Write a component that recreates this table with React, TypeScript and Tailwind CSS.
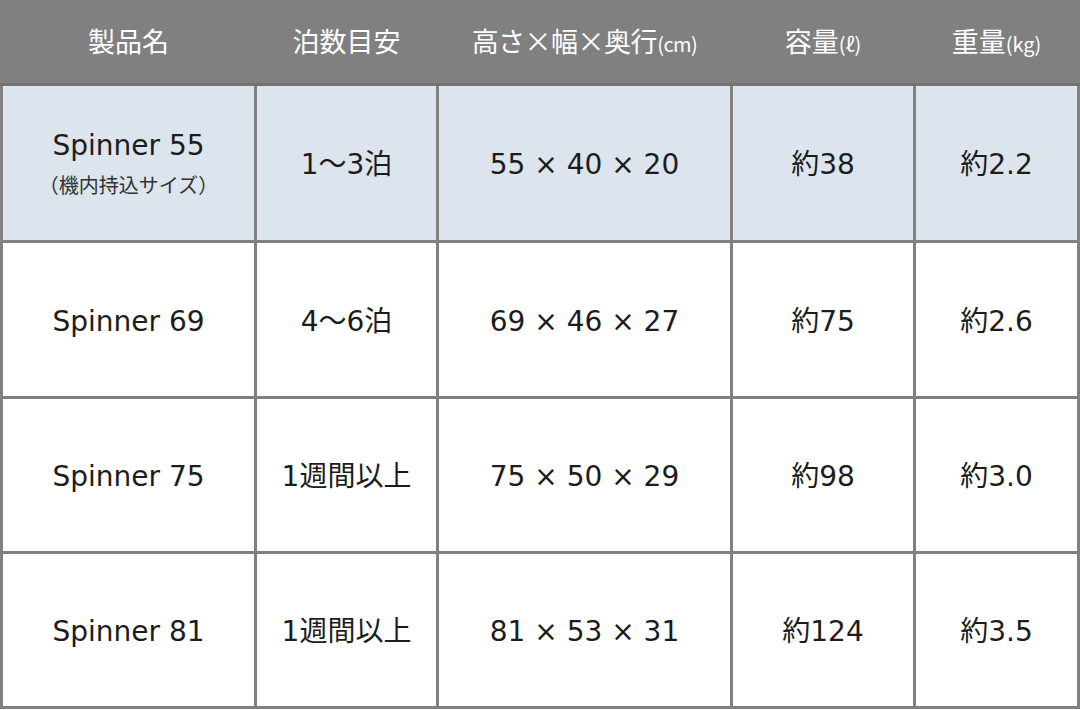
const cols = "grid grid-cols-[251px_179px_291px_180px_161px] gap-x-[3px] px-[3px]";

const rows = [
  { name: "Spinner 55", sub: "（機内持込サイズ）", nights: "1〜3泊", size: "55 × 40 × 20", vol: "約38", weight: "約2.2", h: "h-[154px]", bg: "bg-[#dce4ee]" },
  { name: "Spinner 69", nights: "4〜6泊", size: "69 × 46 × 27", vol: "約75", weight: "約2.6", h: "h-[153px]", bg: "bg-white" },
  { name: "Spinner 75", nights: "1週間以上", size: "75 × 50 × 29", vol: "約98", weight: "約3.0", h: "h-[152px]", bg: "bg-white" },
  { name: "Spinner 81", nights: "1週間以上", size: "81 × 53 × 31", vol: "約124", weight: "約3.5", h: "h-[152px]", bg: "bg-white" },
];

const Cell = ({ children, bg }: { children: React.ReactNode; bg: string }) => (
  <div className={`${bg} pt-[4px] flex flex-col items-center justify-center text-center`}>{children}</div>
);

export default function App() {
  return (
    <div className="w-[1080px] h-[710px] bg-white">
      <div className="bg-[#808080] font-['Noto_Sans_CJK_JP',sans-serif]">
        <div className={`${cols} h-[83px] items-center text-white text-[27px] text-center`}>
          <div>製品名</div>
          <div>泊数目安</div>
          <div className="tracking-[-0.5px]">
            高さ×幅×奥行<span className="text-[20px]">(cm)</span>
          </div>
          <div>
            容量<span className="text-[20px]">(ℓ)</span>
          </div>
          <div>
            重量<span className="text-[20px]">(kg)</span>
          </div>
        </div>
        <div className="h-[3px] bg-[#727272]" />
        <div
          className={`${cols} gap-y-[3px] pb-[3px] text-[#1c1c1c] text-[28px] font-['DejaVu_Sans','Noto_Sans_CJK_JP',sans-serif]`}
        >
          {rows.map((r) => (
            <div key={r.name} className="contents">
              <div className={`${r.h} ${r.bg} ${r.sub ? "" : "pt-[4px]"} flex flex-col items-center justify-center`}>
                <div className="leading-[36px]">{r.name}</div>
                {r.sub && (
                  <div className="mt-[8px] leading-[26px] text-[20px] text-[#333] font-['Noto_Sans_CJK_JP',sans-serif]">
                    {r.sub}
                  </div>
                )}
              </div>
              <Cell bg={r.bg}>{r.nights}</Cell>
              <Cell bg={r.bg}>{r.size}</Cell>
              <Cell bg={r.bg}>{r.vol}</Cell>
              <Cell bg={r.bg}>{r.weight}</Cell>
            </div>
          ))}
        </div>
      </div>
    </div>
  );
}
